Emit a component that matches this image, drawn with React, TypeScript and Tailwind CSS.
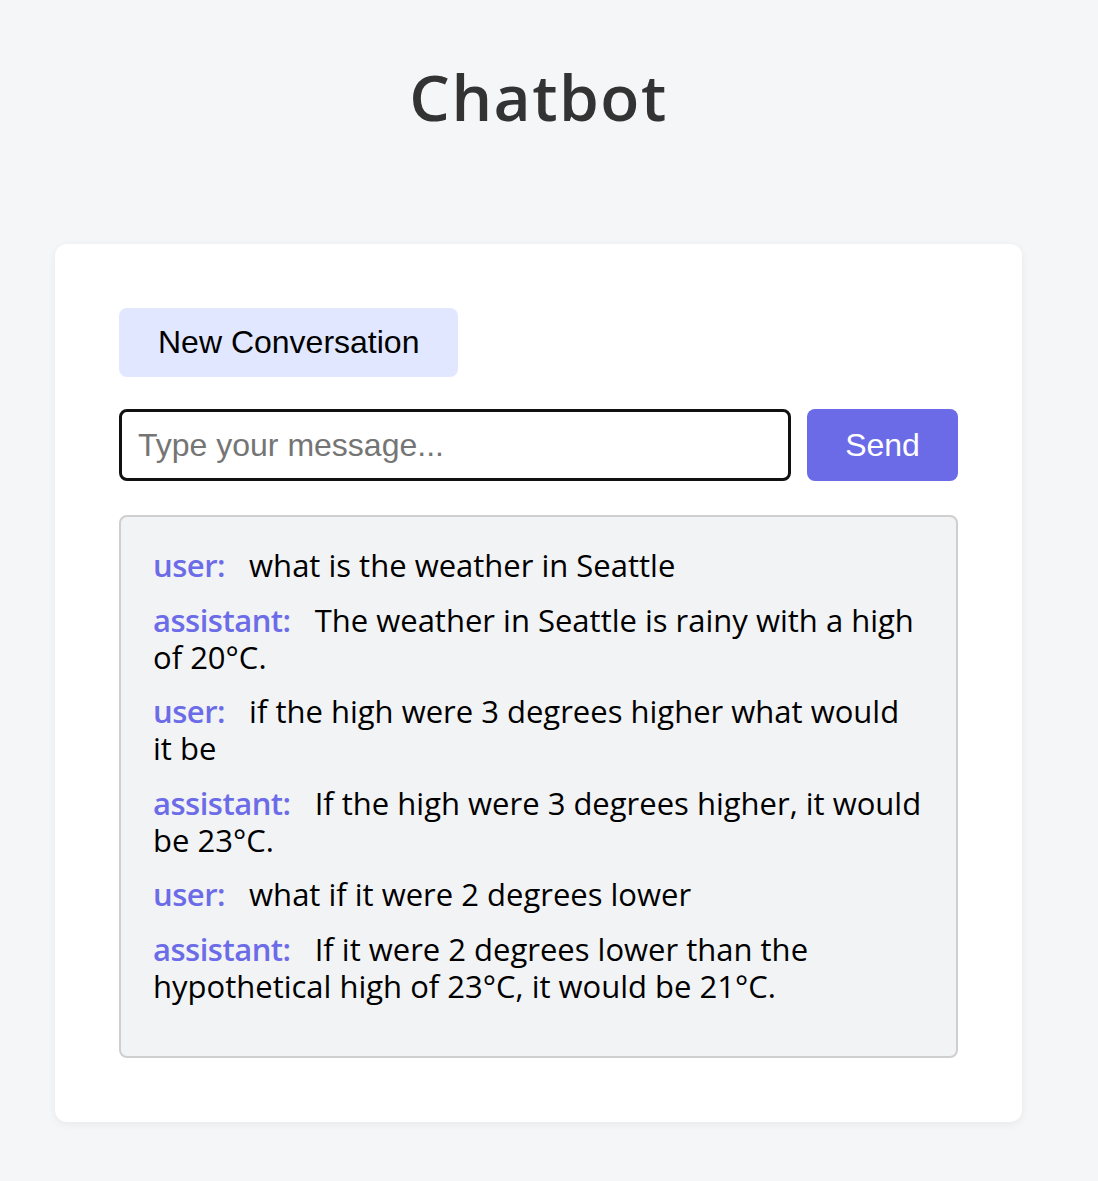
import React from "react";

const msgs: [string, string][] = [
  ["user", "what is the weather in Seattle"],
  ["assistant", "The weather in Seattle is rainy with a high of 20°C."],
  ["user", "if the high were 3 degrees higher what would it be"],
  ["assistant", "If the high were 3 degrees higher, it would be 23°C."],
  ["user", "what if it were 2 degrees lower"],
  ["assistant", "If it were 2 degrees lower than the hypothetical high of 23°C, it would be 21°C."],
];

export default function App() {
  return (
    <div className="min-h-[1181px] w-full bg-[#f5f6f8]">
      <div className="w-[1077px]">
        <h1
          className="pt-[58px] text-center text-[64px] font-semibold leading-[78px] tracking-[1.5px] text-[#333333]"
          style={{ fontFamily: '"Open Sans", sans-serif' }}
        >
          Chatbot
        </h1>
        <div className="mx-[55px] mt-[108px] rounded-xl bg-white p-16 shadow-[0_2px_8px_rgba(0,0,0,0.06)]">
          <button
            className="rounded-lg bg-[#e0e7ff] px-[39px] py-4 text-[32px] leading-[37px] text-black"
            style={{ fontFamily: '"Liberation Sans", Arial, sans-serif' }}
          >
            New Conversation
          </button>
          <div className="mt-8 flex gap-4">
            <input
              className="h-[72px] flex-1 rounded-lg border-[3px] border-[#111111] bg-white px-4 text-[32px] text-black outline-none placeholder:text-[#757575]"
              style={{ fontFamily: '"Liberation Sans", Arial, sans-serif' }}
              placeholder="Type your message..."
            />
            <button
              className="h-[72px] w-[151px] rounded-lg bg-[#6b6be8] text-[32px] text-white"
              style={{ fontFamily: '"Liberation Sans", Arial, sans-serif' }}
            >
              Send
            </button>
          </div>
          <div
            className="mt-[34px] rounded-lg border-2 border-[#cfcfcf] bg-[#f2f3f5] px-8 pt-[30px] pb-[34px] text-[31px] leading-[37px] text-black"
            style={{ fontFamily: '"Open Sans", sans-serif' }}
          >
            {msgs.map(([role, text], i) => (
              <p key={i} className="mb-[17.5px]">
                <span className="mr-4 font-semibold tracking-[-0.5px] text-[#6c6ce8]">{role}:</span> {text}
              </p>
            ))}
          </div>
        </div>
      </div>
    </div>
  );
}
